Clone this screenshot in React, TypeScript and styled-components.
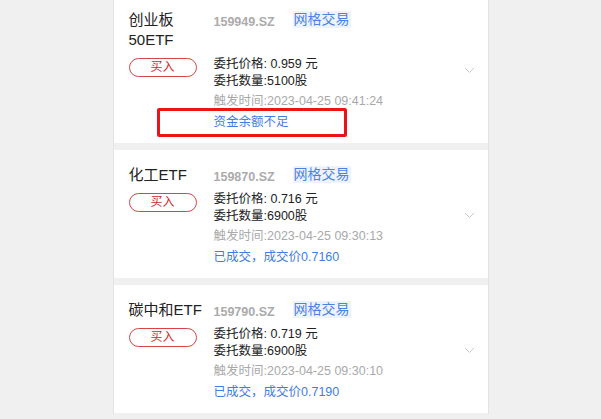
import styled, { createGlobalStyle } from "styled-components";

interface Order {
  name: string;
  code: string;
  price: string;
  qty: string;
  time: string;
  status: string;
  flagged?: boolean;
}

const orders: Order[] = [
  {
    name: "创业板50ETF",
    code: "159949.SZ",
    price: "0.959",
    qty: "5100",
    time: "2023-04-25 09:41:24",
    status: "资金余额不足",
    flagged: true,
  },
  {
    name: "化工ETF",
    code: "159870.SZ",
    price: "0.716",
    qty: "6900",
    time: "2023-04-25 09:30:13",
    status: "已成交，成交价0.7160",
  },
  {
    name: "碳中和ETF",
    code: "159790.SZ",
    price: "0.719",
    qty: "6900",
    time: "2023-04-25 09:30:10",
    status: "已成交，成交价0.7190",
  },
];

const GlobalStyle = createGlobalStyle`
  html, body {
    margin: 0;
    padding: 0;
    background: #f0f0f0;
    font-family: "Liberation Sans", "Noto Sans CJK SC", sans-serif;
    overflow: hidden;
  }
`;

const Page = styled.div`
  width: 376px;
  height: 419px;
  margin: 0 auto;
  box-sizing: border-box;
  border-left: 1px solid #e3e3e3;
  border-right: 1px solid #e3e3e3;
  background: #f0f0f0;
`;

const List = styled.div`
  display: flex;
  flex-direction: column;
  gap: 7px;
  margin-top: -5px;
`;

const Card = styled.div`
  display: flex;
  align-items: center;
  background: #fff;
  padding: 15px 13px 12.5px 15px;
`;

const Content = styled.div`
  flex: 1;
  display: grid;
  grid-template-columns: 85px 1fr;
  row-gap: 5.5px;
`;

const Name = styled.div`
  font-size: 15px;
  line-height: 20px;
  color: #222;
  padding-right: 4px;
`;

const Header = styled.div`
  display: flex;
  align-items: center;
  height: 20px;
`;

const Code = styled.span`
  width: 79px;
  font-size: 12.5px;
  font-weight: bold;
  color: #ababab;
  padding-top: 4px;
`;

const Tag = styled.span`
  font-size: 14px;
  line-height: 17px;
  padding: 0 1px;
  color: #4b82e4;
  background: #edf3fd;
  margin-top: -2px;
`;

const BuyButton = styled.div`
  width: 68px;
  height: 19px;
  box-sizing: border-box;
  margin-top: 2.5px;
  border: 1px solid #d64545;
  border-radius: 10px;
  color: #d02a2a;
  font-size: 12px;
  line-height: 17px;
  text-align: center;
`;

const Details = styled.div`
  display: flex;
  flex-direction: column;
  font-size: 12.5px;
  line-height: 17px;
`;

const Line = styled.div<{ $tone?: "muted" | "link" }>`
  color: ${(p) =>
    p.$tone === "muted" ? "#a9a9a9" : p.$tone === "link" ? "#3f7de3" : "#222"};
  margin-top: ${(p) => (p.$tone ? "3.5px" : "0")};
  position: relative;
  white-space: nowrap;
`;

const Highlight = styled.div`
  position: absolute;
  left: -57px;
  top: -6px;
  width: 190px;
  height: 29px;
  box-sizing: border-box;
  border: 3px solid #ea1515;
  border-radius: 2px;
`;

const Chevron = styled.svg`
  width: 11px;
  height: 7px;
  flex-shrink: 0;
`;

export default function App() {
  return (
    <>
      <GlobalStyle />
      <Page>
        <List>
          {orders.map((o) => (
            <Card key={o.code}>
              <Content>
                <Name>{o.name}</Name>
                <Header>
                  <Code>{o.code}</Code>
                  <Tag>网格交易</Tag>
                </Header>
                <div>
                  <BuyButton>买入</BuyButton>
                </div>
                <Details>
                  <Line>委托价格: {o.price} 元</Line>
                  <Line>委托数量:{o.qty}股</Line>
                  <Line $tone="muted">触发时间:{o.time}</Line>
                  <Line $tone="link">
                    {o.status}
                    {o.flagged && <Highlight />}
                  </Line>
                </Details>
              </Content>
              <Chevron viewBox="0 0 11 7">
                <polyline
                  points="1,1 5.5,5.5 10,1"
                  fill="none"
                  stroke="#c9c9c9"
                  strokeWidth="1"
                />
              </Chevron>
            </Card>
          ))}
        </List>
      </Page>
    </>
  );
}
